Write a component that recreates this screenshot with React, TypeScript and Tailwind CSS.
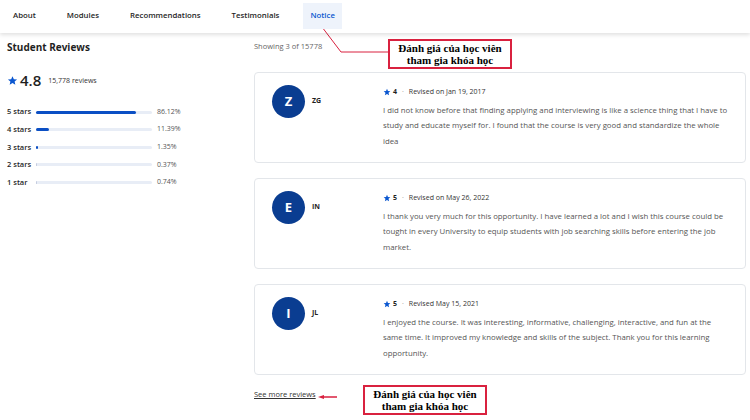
import React from 'react';

const tabs = ['About', 'Modules', 'Recommendations', 'Testimonials', 'Notice'];

const ratings = [
  { label: '5 stars', pct: '86.12%', fill: 86.12 },
  { label: '4 stars', pct: '11.39%', fill: 11.39 },
  { label: '3 stars', pct: '1.35%', fill: 1.35 },
  { label: '2 stars', pct: '0.37%', fill: 0.37 },
  { label: '1 star', pct: '0.74%', fill: 0.74 },
];

const reviews = [
  {
    initial: 'Z',
    name: 'ZG',
    stars: 4,
    date: 'Revised on Jan 19, 2017',
    text: 'I did not know before that finding applying and interviewing is like a science thing that I have to study and educate myself for. I found that the course is very good and standardize the whole idea',
  },
  {
    initial: 'E',
    name: 'IN',
    stars: 5,
    date: 'Revised on May 26, 2022',
    text: 'I thank you very much for this opportunity. I have learned a lot and I wish this course could be tought in every University to equip students with job searching skills before entering the job market.',
  },
  {
    initial: 'I',
    name: 'JL',
    stars: 5,
    date: 'Revised May 15, 2021',
    text: 'I enjoyed the course. It was interesting, informative, challenging, interactive, and fun at the same time. It improved my knowledge and skills of the subject. Thank you for this learning opportunity.',
  },
];

function Star({ className }: { className: string }) {
  return (
    <svg viewBox="0 0 24 24" className={className} fill="currentColor">
      <path d="M12 2.5l2.9 6.6 7.1.6-5.4 4.7 1.6 7-6.2-3.7-6.2 3.7 1.6-7L2 9.7l7.1-.6z" />
    </svg>
  );
}

function Note({ className }: { className: string }) {
  return (
    <div
      className={`absolute border-2 border-[#d9213f] bg-white text-center text-[11px] font-bold leading-[12px] text-black ${className}`}
      style={{ fontFamily: '"Liberation Serif", serif' }}
    >
      Đánh giá của học viên
      <br />
      tham gia khóa học
    </div>
  );
}

export default function App() {
  return (
    <div className="relative h-[420px] w-[750px] overflow-hidden bg-white font-['Open_Sans',sans-serif] text-[#1f1f1f]">
      {/* Tabs */}
      <nav className="relative z-10 flex h-[33px] items-start gap-[17px] pl-[6px] pt-[3px] shadow-[0_2px_4px_rgba(0,0,0,0.12)]">
        {tabs.map((t) => (
          <div
            key={t}
            className={`flex h-[26px] items-center px-[7px] pb-[1px] text-[7.8px] font-semibold ${
              t === 'Notice' ? 'bg-[#eef3fb] text-[#0b57d0]' : 'text-[#1f1f1f]'
            }`}
          >
            {t}
          </div>
        ))}
      </nav>

      <div className="flex pt-[5px]">
        {/* Left column */}
        <div className="w-[254px] pl-[7px]">
          <h2 className="mt-[2px] text-[10px] font-bold leading-[14px]">Student Reviews</h2>
          <div className="mt-[16px] flex items-center">
            <Star className="h-[11px] w-[11px] text-[#0b57d0]" />
            <span className="ml-[2px] text-[15px] font-semibold leading-[20px]">4.8</span>
            <span className="ml-[7px] mt-[2px] text-[7px] text-[#333]">15,778 reviews</span>
          </div>
          <div className="mt-[17px] flex flex-col gap-[7.6px]">
            {ratings.map((r) => (
              <div key={r.label} className="flex h-[10px] items-center">
                <span className="w-[29px] text-[7.5px] font-semibold">{r.label}</span>
                <div className="h-[3px] w-[116px] rounded-full bg-[#e8edf6]">
                  <div
                    className={`h-[3px] rounded-full ${r.fill < 1 ? 'bg-[#c5cde0]' : 'bg-[#0b4fc4]'}`}
                    style={{ width: `${Math.max(r.fill, 1)}%` }}
                  />
                </div>
                <span className="ml-[5px] text-[7px] text-[#555]">{r.pct}</span>
              </div>
            ))}
          </div>
        </div>

        {/* Right column */}
        <div className="w-[492px]">
          <p className="mt-[3px] text-[7.5px] leading-[10px] text-[#666]">Showing 3 of 15778</p>
          <div className="mt-[21px] flex flex-col gap-[15px]">
            {reviews.map((r) => (
              <div
                key={r.name}
                className="flex h-[91px] rounded-[4px] border border-[#e3e6ea] pl-[17px] pt-[12px]"
              >
                <div className="flex w-[111px] items-start">
                  <div className="flex h-[33px] w-[33px] items-center justify-center rounded-full bg-[#0a3d91] text-[13px] font-bold text-white">
                    {r.initial}
                  </div>
                  <span className="ml-[7px] mt-[11px] text-[7px] font-bold">{r.name}</span>
                </div>
                <div className="w-[346px]">
                  <div className="mt-[2px] flex items-center text-[7px]">
                    <Star className="h-[8px] w-[8px] text-[#0b57d0]" />
                    <span className="ml-[2px] font-bold">{r.stars}</span>
                    <span className="mx-[5px] text-[#888]">·</span>
                    <span className="text-[#333]">{r.date}</span>
                  </div>
                  <p className="mt-[5px] text-[7.8px] leading-[15.5px] text-[#555]">{r.text}</p>
                </div>
              </div>
            ))}
          </div>
          <div className="mt-[14px] flex items-center">
            <a className="text-[7.5px] text-[#333] underline">See more reviews</a>
          </div>
        </div>
      </div>

      {/* Annotations */}
      <svg className="absolute left-0 top-0" width="750" height="420">
        <polyline points="322,27 341,52 388,52" fill="none" stroke="#d9213f" strokeWidth="1" />
        <line x1="322" y1="397" x2="337" y2="397" stroke="#d9213f" strokeWidth="1.5" />
        <polygon points="318,397 324,395 324,399" fill="#d9213f" />
      </svg>
      <Note className="left-[388px] top-[39px] w-[124px] py-[1px]" />
      <Note className="left-[363px] top-[385px] w-[124px] py-[1px]" />
    </div>
  );
}
